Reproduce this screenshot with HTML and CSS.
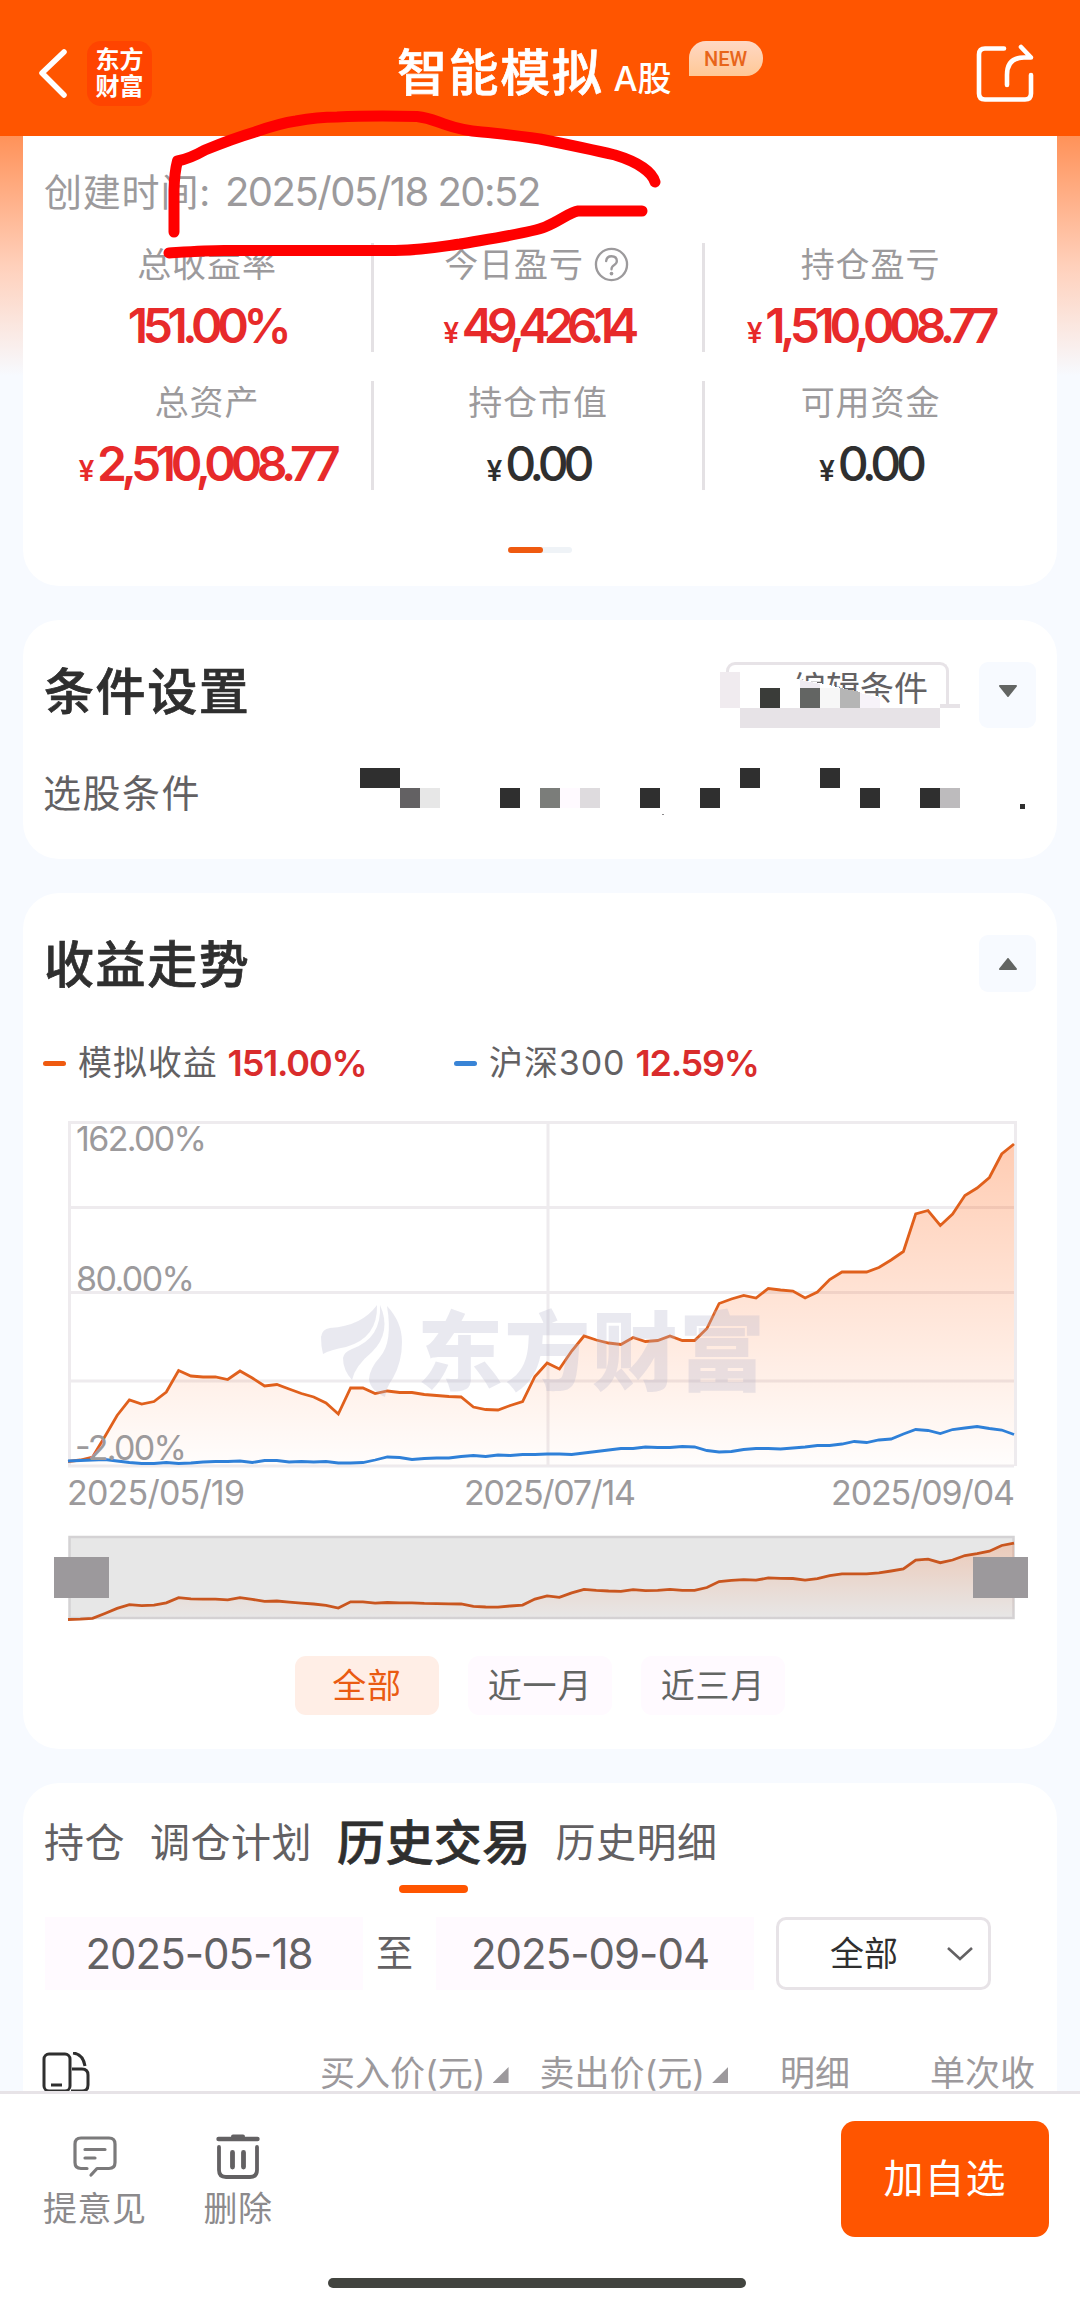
FILE: index.html
```html
<!DOCTYPE html>
<html lang="zh-CN">
<head>
    <meta charset="UTF-8">
    <meta name="viewport" content="width=device-width, initial-scale=1.0">
    <title>智能模拟 A股</title>
    <link rel="stylesheet" href="styles.css">
</head>
<body>
    <div class="page">
        <!-- 顶部导航 -->
        <div class="header">
            <div class="header-left">
                <svg class="back" width="34" height="56" viewBox="0 0 34 56">
                    <path d="M28 7 L6 28 L28 50" fill="none" stroke="#fff" stroke-width="5.5" stroke-linecap="round" stroke-linejoin="round"/>
                </svg>
                <div class="logo"><span>东方</span><span>财富</span></div>
            </div>
            <div class="header-title">
                <h1>智能模拟</h1>
                <span class="market">A股</span>
                <span class="badge">NEW</span>
            </div>
            <svg class="share" width="60" height="60" viewBox="0 0 60 60">
                <g fill="none" stroke="#fff" stroke-width="4.6" stroke-linecap="round" stroke-linejoin="round">
                    <path d="M29 5.5 H10 Q4 5.5 4 11.5 V50.5 Q4 56.5 10 56.5 H50 Q56 56.5 56 50.5 V32"/>
                    <path d="M32 42 V32 Q32 14.5 49 14.5 H56 L46 4"/>
                </g>
            </svg>
        </div>

        <div class="content">
            <!-- 资产概览 -->
            <div class="card summary">
                <div class="created"><span>创建时间:</span><span class="created-date">2025/05/18 20:52</span></div>
                <div class="stats">
                    <div class="stat">
                        <div class="label">总收益率</div>
                        <div class="value red">151.00%</div>
                    </div>
                    <div class="stat">
                        <div class="label">今日盈亏
                            <svg class="help" width="35" height="35" viewBox="0 0 36 36">
                                <g fill="none" stroke="#9c9a9c" stroke-width="2.4" stroke-linecap="round">
                                    <circle cx="18" cy="18" r="16"/>
                                    <path d="M12.5 14.5 Q13 9.5 18 9.5 Q23.5 9.5 23.5 14.5 Q23.5 17 20.5 18.8 Q18 20.3 18 23"/>
                                </g>
                                <circle cx="18" cy="27.3" r="1.9" fill="#9c9a9c"/>
                            </svg>
                        </div>
                        <div class="value red tight"><i>¥</i>49,426.14</div>
                    </div>
                    <div class="stat">
                        <div class="label">持仓盈亏</div>
                        <div class="value red"><i>¥</i>1,510,008.77</div>
                    </div>
                    <div class="stat">
                        <div class="label">总资产</div>
                        <div class="value red"><i>¥</i>2,510,008.77</div>
                    </div>
                    <div class="stat">
                        <div class="label">持仓市值</div>
                        <div class="value zero"><i>¥</i>0.00</div>
                    </div>
                    <div class="stat">
                        <div class="label">可用资金</div>
                        <div class="value zero"><i>¥</i>0.00</div>
                    </div>
                </div>
                <div class="pager"><span></span></div>
            </div>

            <!-- 条件设置 -->
            <div class="card condition">
                <div class="card-head">
                    <h2>条件设置</h2>
                    <div class="edit-btn">编辑条件</div>
                    <div class="toggle toggle-tall">
                        <svg width="20" height="12" viewBox="0 0 20 12"><path d="M2 1 H18 L10 11 Z" fill="#636563" stroke="#636563" stroke-width="2" stroke-linejoin="round"/></svg>
                    </div>
                </div>
                <div class="condition-row">选股条件</div>
                <!-- 打码遮挡 -->
                <svg class="mosaic" width="1034" height="239" viewBox="23 620 1034 239" shape-rendering="crispEdges">
                    <polygon points="726,679 796,679 820,683 880,697 880,708 950,708 955,722 726,722" fill="#fff"/>
                    <g fill="#e7e3e7">
                        <rect x="740" y="708" width="200" height="20"/>
                        <rect x="940" y="704" width="20" height="4"/>
                    </g>
                    <rect x="720" y="672" width="20" height="36" fill="#f0ebef"/>
                    <polygon points="800,680 820,684 820,688 800,688" fill="#efebf1"/>
                    <rect x="760" y="688" width="20" height="20" fill="#3a3c39"/>
                    <rect x="800" y="688" width="20" height="20" fill="#636563"/>
                    <rect x="820" y="688" width="20" height="20" fill="#f7f7f7"/>
                    <polygon points="840,688 860,692 860,708 840,708" fill="#b5b5b5"/>
                    <polygon points="860,693 880,698 880,708 860,708" fill="#f7f3f9"/>
                    <g fill="#2f2f2f">
                        <rect x="360" y="768" width="40" height="20"/>
                        <rect x="500" y="788" width="20" height="20"/>
                        <rect x="640" y="788" width="20" height="20"/>
                        <rect x="700" y="788" width="20" height="20"/>
                        <rect x="740" y="768" width="20" height="20"/>
                        <rect x="820" y="768" width="20" height="20"/>
                        <rect x="860" y="788" width="20" height="20"/>
                        <rect x="920" y="788" width="20" height="20"/>
                        <rect x="1020" y="804" width="5" height="5"/>
                    </g>
                    <rect x="400" y="788" width="20" height="20" fill="#636163"/>
                    <rect x="420" y="788" width="20" height="20" fill="#e7e7e7"/>
                    <rect x="540" y="788" width="20" height="20" fill="#7b7d7a"/>
                    <rect x="560" y="788" width="20" height="20" fill="#fffaff"/>
                    <rect x="580" y="788" width="20" height="20" fill="#dedbde"/>
                    <rect x="940" y="788" width="20" height="20" fill="#bdbbbd"/>
                    <rect x="662" y="814" width="2" height="1" fill="#8c8a8c"/>
                </svg>
            </div>

            <!-- 收益走势 -->
            <div class="card trend">
                <div class="card-head">
                    <h2>收益走势</h2>
                    <div class="toggle">
                        <svg width="20" height="12" viewBox="0 0 20 12"><path d="M2 11 H18 L10 1 Z" fill="#636563" stroke="#636563" stroke-width="2" stroke-linejoin="round"/></svg>
                    </div>
                </div>
                <div class="legend">
                    <div class="legend-item"><b class="dash orange"></b>模拟收益<strong>151.00%</strong></div>
                    <div class="legend-item"><b class="dash blue"></b>沪深300<strong>12.59%</strong></div>
                </div>
                <svg class="chart" width="1034" height="520" viewBox="23 1112 1034 520">
                    <defs>
                        <linearGradient id="area" x1="0" y1="0" x2="0" y2="1">
                            <stop offset="0" stop-color="#ff5500" stop-opacity="0.3"/>
                            <stop offset="1" stop-color="#ff5500" stop-opacity="0.01"/>
                        </linearGradient>
                        <linearGradient id="brushFill" x1="0" y1="0" x2="0" y2="1">
                            <stop offset="0" stop-color="#ff5500" stop-opacity="0.2"/>
                            <stop offset="1" stop-color="#ff5500" stop-opacity="0"/>
                        </linearGradient>
                    </defs>
                    <g fill="none" stroke="#eeebee" stroke-width="3">
                        <path d="M68 1122.5 H1017 M68 1207.5 H1014 M68 1292.5 H1014 M68 1381 H1014 M68 1466 H1014"/>
                        <path d="M69.5 1121 V1467 M548 1121 V1467 M1015.5 1121 V1466" />
                    </g>
                    <path id="profitArea" fill="url(#area)"/>
                    <path id="profitLine" fill="none" stroke="#e0601c" stroke-width="2.8"/>
                    <path id="indexLine" fill="none" stroke="#2f80d8" stroke-width="2.8"/>
                    <g class="axis">
                        <text x="76" y="1151" textLength="131">162.00%</text>
                        <text x="76" y="1291" textLength="119">80.00%</text>
                        <text x="75" y="1460" textLength="112">-2.00%</text>
                        <text x="67" y="1505" textLength="178">2025/05/19</text>
                        <text x="464" y="1505" textLength="172">2025/07/14</text>
                        <text x="831" y="1505" textLength="184">2025/09/04</text>
                    </g>
                    <!-- 水印 -->
                    <g class="watermark">
                        <path d="M321 1337 Q322 1329 330 1328 Q362 1326 377 1305 Q378 1338 346 1347 Q330 1350 323 1354 Q321 1346 321 1337 Z"/>
                        <path d="M380 1305 Q392 1332 372 1352 Q355 1366 352 1380 Q343 1370 343 1358 Q344 1352 352 1349 Q382 1338 380 1305 Z"/>
                        <path d="M387 1306 Q402 1322 402 1342 Q402 1362 393 1378 Q386 1388 385 1397 Q370 1390 369 1379 Q370 1368 380 1357 Q393 1342 387 1306 Z"/>
                        <text x="417" y="1384" textLength="348">东方财富</text>
                    </g>
                    <!-- 缩略区间 -->
                    <rect x="69.5" y="1537" width="944" height="81" fill="#e7e7e7" stroke="#d4d2d4" stroke-width="2.5"/>
                    <path id="brushArea" fill="url(#brushFill)"/>
                    <path id="brushLine" fill="none" stroke="#c9561f" stroke-width="2.8"/>
                    <rect x="54" y="1557" width="55" height="41" fill="#9c999c"/>
                    <rect x="973" y="1557" width="55" height="41" fill="#9c999c"/>
                </svg>
                <div class="ranges">
                    <span class="range active">全部</span>
                    <span class="range">近一月</span>
                    <span class="range">近三月</span>
                </div>
            </div>

            <!-- 历史交易 -->
            <div class="card history">
                <div class="tabs">
                    <span>持仓</span>
                    <span>调仓计划</span>
                    <span class="active">历史交易</span>
                    <span>历史明细</span>
                </div>
                <div class="filters">
                    <span class="date">2025-05-18</span>
                    <span class="to">至</span>
                    <span class="date">2025-09-04</span>
                    <div class="select">
                        <span>全部</span>
                        <svg width="28" height="16" viewBox="0 0 28 16"><path d="M2 2 L14 13 L26 2" fill="none" stroke="#636163" stroke-width="2.6"/></svg>
                    </div>
                </div>
                <div class="table-head">
                    <svg class="rotate" width="48" height="42" viewBox="0 0 48 42">
                        <g fill="none" stroke="#2f2f2f" stroke-width="3">
                            <rect x="2" y="2" width="26" height="37" rx="5"/>
                            <path d="M9 33 H20"/>
                            <path d="M31 1 Q41 2 43 14 M30 17 H40 Q46 17 46 23 V33 Q46 39 40 39 H29"/>
                        </g>
                    </svg>
                    <span class="th buy">买入价(元)<i class="sort"></i></span>
                    <span class="th sell">卖出价(元)<i class="sort"></i></span>
                    <span class="th detail">明细</span>
                    <span class="th">单次收</span>
                </div>
            </div>
        </div>

        <!-- 底部操作栏 -->
        <div class="footer">
            <div class="actions">
                <div class="action">
                    <svg width="46" height="46" viewBox="0 0 46 46">
                        <path d="M15 34.5 H9 Q3 34.5 3 28.5 V10 Q3 4 9 4 H37 Q43 4 43 10 V28.5 Q43 34.5 37 34.5 H25 L19 41 M13 15.5 H33 M13 24 H23" fill="none" stroke="#7b7a7b" stroke-width="3.2" stroke-linecap="round" stroke-linejoin="round"/>
                    </svg>
                    <span>提意见</span>
                </div>
                <div class="action">
                    <svg width="46" height="46" viewBox="0 0 46 46">
                        <g fill="none" stroke="#636163" stroke-linecap="round">
                            <path d="M3.5 5 H42.5" stroke-width="4.4"/>
                            <path d="M18 2.5 H28" stroke-width="4"/>
                            <path d="M4 13 V36 Q4 43 11 43 H35 Q42 43 42 36 V13" stroke-width="3.8"/>
                            <path d="M17.5 18.5 V33 M28.5 18.5 V33" stroke-width="4.8"/>
                        </g>
                    </svg>
                    <span>删除</span>
                </div>
                <div class="add-btn">加自选</div>
            </div>
            <div class="home-bar"></div>
        </div>

        <!-- 手绘圈注 -->
        <svg class="scribble" width="520" height="160" viewBox="150 105 520 160">
            <g fill="none" stroke="#ff0000" stroke-width="11" stroke-linecap="round" stroke-linejoin="round">
                <path d="M174 232 L174 190 Q174.500 172 177.500 161 C188 159 198 154 205 150 C222 143 238 137 255 132 C272 126 282 123 296 121 C312 118 325 117 337 117 C360 116 395 116 417 116.500 C430 118 435 121 444 124 C458 129 468 131 482 132 C505 134 525 137 540 139 C560 143 598 151 615 155 C638 162 652 172 655 182"/>
                <path d="M169 253 C185 252 205 250.500 224 250.500 L395 250.500 C425 250 445 246 460 244 C495 238 530 233 545 227 C560 221 570 212 578 211 L642 211"/>
            </g>
        </svg>
    </div>
    <script src="script.js"></script>
</body>
</html>
```

FILE: styles.css
```css
* {
    margin: 0;
    padding: 0;
    box-sizing: border-box;
}
body {
    font-family: Inter, "Noto Sans CJK SC", sans-serif;
    background: #f7faff;
    color: #2f2f2f;
}
i {
    font-style: normal;
}
svg {
    display: block;
    flex-shrink: 0;
}
.page {
    position: relative;
    display: flex;
    flex-direction: column;
    width: 1080px;
    height: 2308px;
    overflow: hidden;
}

/* 顶部导航 */
.header {
    display: grid;
    grid-template-columns: 361px 1fr 60px;
    align-items: center;
    flex-shrink: 0;
    height: 136px;
    padding: 10px 45px 0 36px;
    background: #ff5500;
    color: #fff;
}
.header-left {
    display: flex;
    align-items: center;
    gap: 17px;
}
.logo {
    display: flex;
    flex-direction: column;
    align-items: center;
    justify-content: center;
    width: 65px;
    height: 65px;
    border-radius: 14px;
    background: #ff4400;
    font-size: 24px;
    font-weight: 700;
    line-height: 27px;
}
.header-title {
    display: flex;
    align-items: baseline;
    height: 64px;
    line-height: 64px;
}
.header-title h1 {
    font-size: 50px;
    font-weight: 500;
    letter-spacing: 1.6px;
    -webkit-text-stroke: 0.7px #fff;
}
.market {
    margin-left: 10px;
    font-size: 34px;
    font-weight: 500;
}
.badge {
    align-self: flex-start;
    width: 74px;
    height: 35px;
    margin-left: 17px;
    border-radius: 17px 17px 17px 0;
    background: linear-gradient(#ffd8c4, #ffc896);
    color: #e8651a;
    font-family: Roboto, sans-serif;
    font-size: 20px;
    font-weight: 500;
    line-height: 36px;
    text-align: center;
}

/* 卡片 */
.content {
    flex: 1;
    min-height: 0;
    overflow: hidden;
    padding: 0 23px;
    background: linear-gradient(#ff9259, #ffd0bb 130px, #f7faff 240px);
}
.card {
    position: relative;
    margin-bottom: 34px;
    padding: 0 22px;
    border-radius: 36px;
    background: #fff;
}
.card-head {
    display: flex;
    align-items: flex-start;
    height: 102px;
    padding-top: 42px;
}
.card-head h2 {
    flex: 1;
    margin-left: -1px;
    font-size: 50px;
    font-weight: 500;
    letter-spacing: 1.6px;
    line-height: 60px;
    -webkit-text-stroke: 0.7px #2f2f2f;
}
.toggle {
    display: flex;
    justify-content: center;
    width: 57px;
    height: 57px;
    margin-right: -1px;
    padding-top: 23px;
    border-radius: 9px;
    background: #f7faff;
}
.toggle-tall {
    height: 66px;
}

/* 资产概览 */
.summary {
    height: 450px;
    padding: 31px 18px 0;
    border-radius: 0 0 36px 36px;
}
.created {
    padding-left: 3px;
    color: #9c9a9c;
    font-size: 38px;
    letter-spacing: 0.8px;
    line-height: 50px;
}
.created-date {
    margin-left: 14px;
    font-size: 40px;
    letter-spacing: -1.5px;
}
.stats {
    display: grid;
    grid-template-columns: repeat(3, 331px);
    row-gap: 29px;
    margin-top: 26px;
    margin-left: 2px;
}
.stat {
    height: 109px;
    border-right: 3px solid #e4e1e4;
    text-align: center;
}
.stat:nth-child(3n) {
    border-right: none;
}
.label {
    display: flex;
    align-items: center;
    justify-content: center;
    color: #9c9a9c;
    font-size: 34px;
    letter-spacing: 0.9px;
    line-height: 43px;
}
.help {
    margin-left: 10px;
    margin-right: 3px;
}
.value {
    margin-top: 12px;
    font-size: 48px;
    font-weight: 600;
    letter-spacing: -5.4px;
    line-height: 56px;
    white-space: nowrap;
}
.value i {
    margin-right: 3px;
    font-family: Roboto, sans-serif;
    font-size: 29px;
    font-weight: 500;
    letter-spacing: 0;
}
.tight {
    letter-spacing: -6.7px;
}
.zero {
    font-weight: 500;
    letter-spacing: -5.2px;
}
.red {
    color: #e72a2a;
}
.pager {
    width: 64px;
    height: 6px;
    margin: 57px auto 0;
    border-radius: 3px;
    background: #eff3f7;
}
.pager span {
    display: block;
    width: 35px;
    height: 6px;
    border-radius: 3px;
    background: #ef5a10;
}

/* 条件设置 */
.condition {
    height: 239px;
}
.edit-btn {
    width: 223px;
    height: 57px;
    margin-right: 30px;
    padding-right: 18px;
    border: 3px solid #e7e3e7;
    border-bottom: none;
    border-radius: 9px 9px 0 0;
    color: #636163;
    font-size: 34px;
    line-height: 48px;
    text-align: right;
}
.condition-row {
    margin-top: 46px;
    margin-left: -2px;
    color: #636163;
    font-size: 38px;
    letter-spacing: 1.5px;
    line-height: 50px;
}
.mosaic {
    position: absolute;
    top: 0;
    left: 0;
}

/* 收益走势 */
.trend {
    height: 856px;
}
.legend {
    display: flex;
    height: 40px;
    margin-top: 48px;
    margin-left: -2px;
    color: #636163;
    font-size: 34px;
    line-height: 40px;
}
.legend-item {
    display: flex;
    align-items: center;
    width: 411px;
    letter-spacing: 0.9px;
}
.dash {
    width: 23px;
    height: 5px;
    margin-right: 12px;
    border-radius: 3px;
}
.dash.orange {
    background: #ef5a10;
}
.dash.blue {
    background: #3984d6;
}
.legend strong {
    margin-left: 10px;
    color: #d92c2c;
    font-size: 36px;
    font-weight: 600;
    letter-spacing: -1.2px;
}
.chart {
    margin: 29px -22px 0;
}
.axis {
    fill: #9c9a9c;
    font-size: 34px;
}
.watermark {
    fill: #b4b2cd;
    fill-opacity: 0.29;
    font-size: 86px;
    font-weight: 900;
}
.ranges {
    display: flex;
    justify-content: center;
    gap: 29px;
    margin-top: 24px;
}
.range {
    width: 144px;
    height: 59px;
    border-radius: 11px;
    background: #fffaff;
    color: #636563;
    font-size: 34px;
    letter-spacing: 0.8px;
    line-height: 59px;
    text-align: center;
}
.range.active {
    background: #ffeee6;
    color: #ea5b12;
}

/* 历史交易 */
.history {
    height: 400px;
    padding-top: 24px;
}
.tabs {
    display: flex;
    gap: 25px;
    height: 86px;
    margin-left: -1px;
    color: #636163;
    font-size: 40px;
    letter-spacing: 0.5px;
    line-height: 72px;
}
.tabs .active {
    display: flex;
    flex-direction: column;
    align-items: center;
    color: #2f2f2f;
    font-size: 48px;
    font-weight: 500;
    letter-spacing: 0.4px;
    -webkit-text-stroke: 0.7px #2f2f2f;
}
.tabs .active::after {
    content: "";
    width: 69px;
    height: 8px;
    margin-top: 6px;
    border-radius: 4px;
    background: #ff5500;
}
.filters {
    display: flex;
    margin-top: 24px;
    color: #636163;
    line-height: 74px;
}
.date {
    width: 318px;
    height: 73px;
    padding-right: 10px;
    background: #fffaff;
    font-size: 42px;
    letter-spacing: -1px;
    text-align: center;
}
.to {
    width: 73px;
    padding-right: 10px;
    font-size: 37px;
    text-align: center;
}
.select {
    display: flex;
    align-items: center;
    justify-content: space-between;
    width: 215px;
    height: 73px;
    margin-left: 22px;
    padding: 0 14px 0 51px;
    border: 3px solid #e7e3e7;
    border-radius: 10px;
    color: #2f2f2f;
    font-size: 34px;
}
.table-head {
    display: flex;
    margin-top: 60px;
    margin-left: -3px;
    color: #9c999c;
    font-size: 35px;
    line-height: 44px;
    white-space: nowrap;
}
.rotate {
    margin-top: 1px;
}
.buy {
    margin-left: 230px;
}
.sell {
    margin-left: 31px;
}
.detail {
    width: 150px;
    margin-left: 52px;
}
.sort {
    display: inline-block;
    width: 16px;
    height: 16px;
    margin-left: 7px;
    background: #9c999c;
    clip-path: polygon(100% 0, 100% 100%, 0 100%);
    vertical-align: 3px;
}

/* 底部操作栏 */
.footer {
    display: flex;
    flex-direction: column;
    flex-shrink: 0;
    height: 217px;
    border-top: 3px solid #e7e3e7;
    background: #fff;
}
.actions {
    display: flex;
    padding: 27px 31px 0 43px;
}
.action {
    display: flex;
    flex-direction: column;
    align-items: center;
    gap: 7px;
    margin-right: 57px;
    padding-top: 13px;
    color: #8c8a8c;
    font-size: 34px;
    letter-spacing: 0.5px;
    line-height: 44px;
}
.add-btn {
    width: 208px;
    height: 116px;
    margin-left: auto;
    border-radius: 14px;
    background: #ff5500;
    color: #fff;
    font-size: 40px;
    letter-spacing: 1px;
    line-height: 115px;
    text-align: center;
}
.home-bar {
    width: 418px;
    height: 10px;
    margin: 41px auto 0 328px;
    border-radius: 5px;
    background: #42443f;
}
.scribble {
    position: absolute;
    top: 105px;
    left: 150px;
}
```

FILE: script.js
```js
// 每个交易日的纵坐标
const profit = [
    1461.5, 1460, 1457, 1436.5, 1415.5, 1400, 1404, 1401.5, 1392, 1370.5, 1376, 1377, 1377,
    1379.5, 1371, 1378, 1386, 1384.5, 1389, 1393.5, 1397, 1403, 1414, 1388, 1388, 1393.5,
    1391, 1392.5, 1392.5, 1394.5, 1395.5, 1396.5, 1397, 1407, 1409.5, 1410, 1405.5, 1401.5, 1376.5,
    1363, 1369, 1351, 1336, 1340, 1343, 1344.5, 1337.5, 1341.5, 1340.5, 1336, 1340.5, 1340.5,
    1328.5, 1303.5, 1299, 1295.5, 1298, 1288.5, 1290, 1291, 1298, 1292, 1279.5, 1272, 1272,
    1272, 1267.5, 1260, 1251.5, 1214, 1210.5, 1225.5, 1214, 1195.5, 1188, 1177.5, 1154, 1144
];
const hs300 = [
    1461, 1460.5, 1460, 1459.5, 1461, 1462.5, 1463.5, 1463.5, 1462.5, 1463.5, 1463, 1462, 1461.5,
    1461.5, 1461, 1462.5, 1460.5, 1460.5, 1462, 1461.5, 1462, 1461.5, 1463, 1463, 1462.5, 1460,
    1457, 1457.5, 1459.5, 1458.5, 1458, 1458, 1456.5, 1455.5, 1456.5, 1455, 1455.5, 1454.5, 1454.5,
    1454, 1454, 1454.5, 1453, 1451.5, 1450, 1448.5, 1448.5, 1447, 1447.5, 1447.5, 1446.5, 1447,
    1450.5, 1452, 1451.5, 1449.5, 1448.5, 1448.5, 1449, 1448, 1447, 1445.5, 1445.5, 1444, 1441.5,
    1442.5, 1440, 1439, 1434, 1429.5, 1430.5, 1433.5, 1429.5, 1428, 1426.5, 1428.5, 1430, 1434.5
];

const left = 68;
const right = 1014;

function toPath(data) {
    const step = (right - left) / (data.length - 1);
    return 'M' + data.map((y, i) => (left + i * step).toFixed(1) + ' ' + y.toFixed(1)).join(' L');
}

function setPath(id, d) {
    document.getElementById(id).setAttribute('d', d);
}

// 缩略图按比例压缩
const brush = profit.map(y => 1619.5 - (1461.5 - y) * 0.2405);

setPath('profitLine', toPath(profit));
setPath('profitArea', toPath(profit) + ` L${right} 1466 L${left} 1466 Z`);
setPath('indexLine', toPath(hs300));
setPath('brushLine', toPath(brush));
setPath('brushArea', toPath(brush) + ` L${right} 1619 L${left} 1619 Z`);
```
